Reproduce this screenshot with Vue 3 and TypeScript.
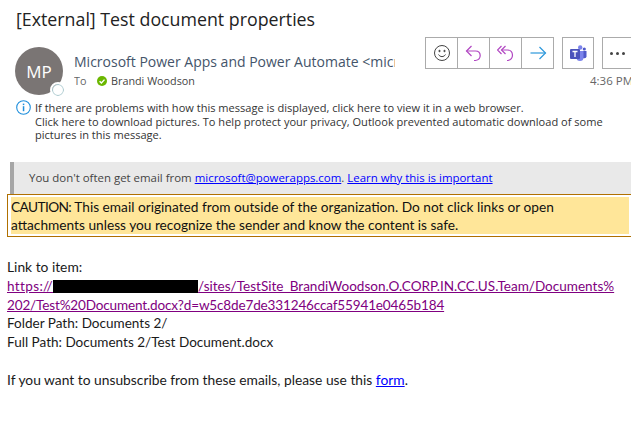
<template>
  <div class="mail">
    <h1 class="subject">[External] Test document properties</h1>

    <header class="head">
      <div class="avatar">
        <span>MP</span>
        <i class="presence"></i>
      </div>
      <div class="who">
        <div class="sender">Microsoft Power Apps and Power Automate &lt;microsoft@powerapps.com&gt;</div>
        <div class="to">
          <span class="to-label">To</span>
          <svg class="check" viewBox="0 0 10 10" width="10" height="10">
            <circle cx="5" cy="5" r="5" fill="#6bb700" />
            <path d="M2.6 5.2 4.4 7 7.5 3.6" fill="none" stroke="#fff" stroke-width="1.4" />
          </svg>
          <span>Brandi Woodson</span>
        </div>
      </div>
      <div class="side">
        <div class="tools">
          <div class="group">
            <button class="tool">
              <svg viewBox="0 0 18 18" width="18" height="18" fill="none" stroke="#444" stroke-width="1">
                <circle cx="9" cy="9" r="7.5" />
                <circle cx="6.5" cy="7" r=".7" fill="#444" />
                <circle cx="11.5" cy="7" r=".7" fill="#444" />
                <path d="M5.5 10.5c1.6 2.8 5.4 2.8 7 0" />
              </svg>
            </button>
            <button class="tool">
              <svg viewBox="0 0 18 18" width="18" height="18" fill="none" stroke="#b146c2" stroke-width="1.2">
                <path d="M6.5 2 1.5 7l5 5" />
                <path d="M1.5 7h9c6 0 6.5 8.500 0 9.500H9" />
              </svg>
            </button>
            <button class="tool">
              <svg viewBox="0 0 18 18" width="18" height="18" fill="none" stroke="#b146c2" stroke-width="1.2">
                <path d="M4.500 2 .5 6l4 4" />
                <path d="M8.500 2 4.500 6l4 4" />
                <path d="M4.500 6h6c6 0 7 9 .5 10.500H10" />
              </svg>
            </button>
            <button class="tool last">
              <svg viewBox="0 0 18 18" width="18" height="18" fill="none" stroke="#2b97db" stroke-width="1.2">
                <path d="M1.500 9h15" />
                <path d="M10.500 3l6 6-6 6" />
              </svg>
            </button>
          </div>
          <button class="tool single">
            <svg viewBox="0 0 18 18" width="18" height="18">
              <circle cx="11.200" cy="3.500" r="2.200" fill="#7b83eb" />
              <circle cx="15.300" cy="5" r="1.600" fill="#5059c9" />
              <path d="M13 7h4.500v5.200a2 2 0 0 1-2 2H13z" fill="#5059c9" />
              <path d="M7 7h7.500v6.500a3.500 3.500 0 0 1-7 0z" fill="#7b83eb" />
              <rect x="1" y="5" width="10" height="10" rx="1" fill="#4b53bc" />
              <path d="M3.500 7.500h5M6 7.500v5.500" stroke="#fff" stroke-width="1.300" fill="none" />
            </svg>
          </button>
          <button class="tool more">
            <span></span><span></span><span></span>
          </button>
        </div>
        <div class="time">4:36 PM</div>
      </div>
    </header>

    <div class="notice">
      <svg class="info" viewBox="0 0 15 15" width="15" height="15">
        <circle cx="7.500" cy="7.500" r="6.800" fill="none" stroke="#1f8fdc" stroke-width="1.100" />
        <rect x="6.800" y="6.200" width="1.500" height="5" fill="#1f8fdc" />
        <rect x="6.800" y="3.600" width="1.500" height="1.500" fill="#1f8fdc" />
      </svg>
      <p>If there are problems with how this message is displayed, click here to view it in a web browser.<br />Click here to download pictures. To help protect your privacy, Outlook prevented automatic download of some pictures in this message.</p>
    </div>

    <div class="tip">
      You don't often get email from <a class="blue">microsoft@powerapps.com</a>. <a class="blue">Learn why this is important</a>
    </div>

    <div class="caution">
      <p><span class="tag">CAUTION:</span> This email originated from outside of the organization. Do not click links or open attachments unless you recognize the sender and know the content is safe.</p>
    </div>

    <div class="body">
      <div>Link to item:</div>
      <div class="url"><a class="visited"><span class="scheme">https://</span><span class="redact"></span>/sites/TestSite_BrandiWoodson.O.CORP.IN.CC.US.Team/Documents%<span class="tail">202/Test%20Document.docx?d=w5c8de7de331246ccaf55941e0465b184</span></a></div>
      <div class="path">Folder Path: Documents 2/</div>
      <div class="path">Full Path: Documents 2/Test Document.docx</div>
      <div class="gap">If you want to unsubscribe from these emails, please use this <a class="blue">form</a>.</div>
    </div>
  </div>
</template>

<script setup lang="ts">
</script>

<style>
html,
body {
  margin: 0;
  background: #fff;
  overflow: hidden;
}
</style>

<style scoped>
.mail {
  width: 631px;
  height: 421px;
  overflow: hidden;
  font-family: "Open Sans", "Noto Sans", sans-serif;
  color: #262626;
}

.subject {
  margin: 0;
  padding: 7px 0 0 16px;
  height: 39px;
  box-sizing: border-box;
  font-size: 17.800px;
  font-weight: 400;
  line-height: 24px;
  color: #222;
}

.head {
  display: flex;
  height: 60px;
  padding-left: 15px;
}

.avatar {
  position: relative;
  flex: none;
  width: 48px;
  height: 48px;
  margin-top: 8px;
  border-radius: 50%;
  background: #7a7574;
  color: #fff;
  display: flex;
  align-items: center;
  justify-content: center;
  font-size: 17px;
}

.presence {
  position: absolute;
  right: -1px;
  bottom: -1px;
  width: 10px;
  height: 10px;
  border: 1px solid #a5c6cc;
  outline: 2px solid #fff;
  border-radius: 50%;
  background: #fff;
}

.who {
  width: 321px;
  margin-left: 11px;
  flex: none;
  overflow: hidden;
  padding-top: 13px;
}

.sender {
  white-space: nowrap;
  overflow: hidden;
  font-size: 14px;
  line-height: 20px;
  color: #44546a;
}

.to {
  display: flex;
  align-items: center;
  font-size: 10.800px;
  line-height: 18px;
  color: #444;
}

.to-label {
  width: 23px;
  color: #666;
}

.check {
  margin-right: 4px;
}

.side {
  flex: none;
  width: 206px;
  margin-left: 30px;
  margin-top: -2px;
}

.tools {
  display: flex;
  height: 32px;
  gap: 8px;
}

.group {
  display: flex;
  flex: none;
  border: 1px solid #ababab;
  box-sizing: border-box;
  height: 32px;
}

.tool {
  width: 32px;
  height: 30px;
  padding: 0;
  border: 0;
  border-right: 1px solid #ababab;
  background: #fff;
  display: flex;
  align-items: center;
  justify-content: center;
}

.tool.last {
  width: 31px;
  border-right: 0;
}

.single {
  width: 32px;
  height: 32px;
  flex: none;
  border: 1px solid #ababab;
  box-sizing: border-box;
}

.more {
  width: 40px;
  height: 32px;
  border: 1px solid #ababab;
  box-sizing: border-box;
  gap: 3px;
  justify-content: flex-start;
  padding-left: 7px;
  flex: none;
}

.more span {
  width: 3px;
  height: 3px;
  border-radius: 50%;
  background: #444;
}

.time {
  margin-top: 4px;
  padding-left: 165px;
  white-space: nowrap;
  font-size: 11.500px;
  line-height: 16px;
  color: #666;
}

.notice {
  display: flex;
  height: 63px;
  padding-left: 16px;
}

.info {
  flex: none;
  margin-top: 1px;
}

.notice p {
  margin: 2px 0 0 4px;
  width: 578px;
  font-size: 11.050px;
  line-height: 13.600px;
  color: #333;
}

.tip {
  margin-left: 10px;
  height: 32px;
  box-sizing: border-box;
  border-left: 4px solid #a6a6a6;
  background: #e9e9e9;
  padding-left: 15px;
  font-size: 11.450px;
  line-height: 32px;
  color: #444;
  white-space: nowrap;
}

.blue {
  color: #0000ff;
  text-decoration: underline;
}

.caution {
  margin: 0 0 0 7px;
  height: 43px;
  box-sizing: border-box;
  border-top: 1px solid #b07000;
  border-bottom: 1px solid #b07000;
  border-left: 1px solid #b07000;
  padding: 2px 2px 2px 3px;
}

.caution p {
  margin: 0;
  padding-top: 1px;
  background: #ffe699;
  font-family: Lato, "Open Sans", sans-serif;
  font-size: 13.700px;
  line-height: 18px;
  height: 36px;
  color: #111;
}

.tag {
  letter-spacing: -0.6px;
}

.body {
  margin-top: 21px;
  padding: 0 0 0 7px;
  font-family: Lato, "Open Sans", sans-serif;
  font-size: 13.800px;
  line-height: 18.800px;
  color: #1a1a1a;
}

.url {
  width: 612px;
  font-size: 13.550px;
}

.path {
  font-size: 13.550px;
}

.visited {
  color: #800080;
  text-decoration: underline;
  word-break: break-all;
}

.scheme {
  letter-spacing: 0.35px;
}

.tail {
  letter-spacing: -0.16px;
}

.redact {
  display: inline-block;
  width: 145px;
  height: 13px;
  background: #000;
  vertical-align: -2px;
}

.gap {
  margin-top: 18.800px;
}
</style>
